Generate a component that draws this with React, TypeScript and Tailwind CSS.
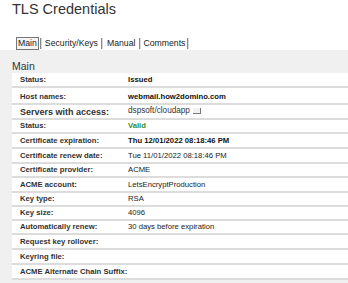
type Row = {
  label: string;
  value?: string;
  h: string;
  labelCls?: string;
  valueCls?: string;
  button?: boolean;
};

const rows: Row[] = [
  { label: "Status:", value: "Issued", h: "h-[15px]", valueCls: "font-bold text-[#111]" },
  { label: "Host names:", value: "webmail.how2domino.com", h: "h-[17px] pt-[3px]", valueCls: "font-bold text-[#111]" },
  {
    label: "Servers with access:",
    value: "dspsoft/cloudapp",
    h: "h-[15px]",
    labelCls: "text-[9px]",
    valueCls: "text-[8.2px] text-[#333] -mt-[1px]",
    button: true,
  },
  { label: "Status:", value: "Valid", h: "h-[14px]", valueCls: "font-bold text-[#2f8f2f]" },
  { label: "Certificate expiration:", value: "Thu 12/01/2022 08:18:46 PM", h: "h-[15px]", valueCls: "font-bold text-[#111]" },
  { label: "Certificate renew date:", value: "Tue 11/01/2022 08:18:46 PM", h: "h-[15px]" },
  { label: "Certificate provider:", value: "ACME", h: "h-[14px]" },
  { label: "ACME account:", value: "LetsEncryptProduction", h: "h-[15px]" },
  { label: "Key type:", value: "RSA", h: "h-[14px]" },
  { label: "Key size:", value: "4096", h: "h-[14px]" },
  { label: "Automatically renew:", value: "30 days before expiration", h: "h-[14px]" },
  { label: "Request key rollover:", h: "h-[15px]" },
  { label: "Keyring file:", h: "h-[15px]" },
  { label: "ACME Alternate Chain Suffix:", h: "h-[15px]" },
];

function Sep() {
  return (
    <span className="mx-[1px] flex h-[11px]">
      <span className="w-[1px] bg-[#8a8a8a]" />
      <span className="w-[1px] bg-[#d8d8d8]" />
    </span>
  );
}

export default function App() {
  return (
    <div className="h-[283px] w-[348px] overflow-hidden bg-white font-['Liberation_Sans',Arial,sans-serif]">
      {/* header */}
      <div className="h-[50px] bg-white">
        <h1 className="pl-[12px] pt-[1px] text-[14.5px] leading-[17px] text-[#333]">TLS Credentials</h1>
        <nav className="mt-[19px] flex items-center pl-[16px] text-[8.7px] leading-[11px] text-[#222]">
          <span className="border border-[#777] bg-[#f4f4f4] px-[1px]">Main</span>
          <Sep />
          <span className="px-[2px]">Security/Keys</span>
          <Sep />
          <span className="px-[3px]">Manual</span>
          <Sep />
          <span className="px-[1px]">Comments</span>
          <Sep />
        </nav>
      </div>

      {/* main section */}
      <div className="h-[233px] bg-[#f0f0f0] pl-[12px]">
        <div className="pt-[10px] text-[10.5px] leading-[13px] text-[#333]">Main</div>
        <div className="w-[400px] bg-white">
          {rows.map((r, i) => (
            <div
              key={i}
              className={`grid grid-cols-[116px_1fr] items-center border-b-2 border-[#dcdcdc] text-[7.7px] leading-[10px] ${r.h}`}
            >
              <span className={`pl-[8px] font-bold text-[#333] ${r.labelCls ?? ""}`}>{r.label}</span>
              <span className={`flex items-center ${r.valueCls ?? "text-[#222]"}`}>
                {r.value}
                {r.button && (
                  <span className="ml-[3px] inline-block h-[6px] w-[8px] border-b border-r border-[#777] bg-[#f2f2f2]" />
                )}
              </span>
            </div>
          ))}
        </div>
      </div>
    </div>
  );
}
